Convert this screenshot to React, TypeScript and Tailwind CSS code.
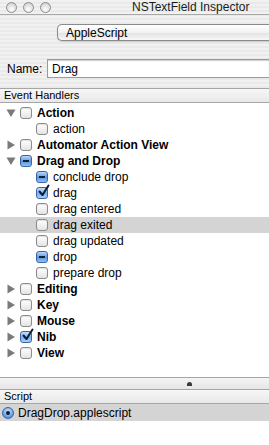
import React from 'react';

type CheckState = 'off' | 'on' | 'mixed';

type Row = {
  label: string;
  level: 0 | 1;
  state: CheckState;
  open?: boolean;
  selected?: boolean;
};

const rows: Row[] = [
  { label: 'Action', level: 0, state: 'off', open: true },
  { label: 'action', level: 1, state: 'off' },
  { label: 'Automator Action View', level: 0, state: 'off', open: false },
  { label: 'Drag and Drop', level: 0, state: 'mixed', open: true },
  { label: 'conclude drop', level: 1, state: 'mixed' },
  { label: 'drag', level: 1, state: 'on' },
  { label: 'drag entered', level: 1, state: 'off' },
  { label: 'drag exited', level: 1, state: 'off', selected: true },
  { label: 'drag updated', level: 1, state: 'off' },
  { label: 'drop', level: 1, state: 'mixed' },
  { label: 'prepare drop', level: 1, state: 'off' },
  { label: 'Editing', level: 0, state: 'off', open: false },
  { label: 'Key', level: 0, state: 'off', open: false },
  { label: 'Mouse', level: 0, state: 'off', open: false },
  { label: 'Nib', level: 0, state: 'on', open: false },
  { label: 'View', level: 0, state: 'off', open: false },
];

function Triangle({ open }: { open: boolean }) {
  return (
    <svg width="10" height="10" viewBox="0 0 10 10" className="shrink-0">
      {open ? (
        <polygon points="0.5,1.5 9.5,1.5 5,9" fill="#7a7a7a" />
      ) : (
        <polygon points="1.5,0.5 9,5 1.5,9.5" fill="#7a7a7a" />
      )}
    </svg>
  );
}

function Checkbox({ state }: { state: CheckState }) {
  if (state === 'off') {
    return (
      <div className="w-[12px] h-[12px] shrink-0 rounded-[3px] border border-[#8c8c8c] bg-[linear-gradient(#ffffff,#e4e4e4)] shadow-[inset_0_1px_1px_rgba(0,0,0,0.12)]" />
    );
  }
  if (state === 'mixed') {
    return (
      <div className="w-[12px] h-[12px] shrink-0 rounded-[3px] border border-[#3a63a8] bg-[linear-gradient(#b9d6f6,#5a98e2_55%,#8fc2f6)] flex items-center justify-center">
        <div className="w-[6px] h-[2px] bg-[#0f1f3f]" />
      </div>
    );
  }
  return (
    <div className="relative w-[12px] h-[12px] shrink-0 rounded-[3px] border border-[#3a63a8] bg-[linear-gradient(#c6def8,#7ab0ec_55%,#a9d0f8)]">
      <svg width="14" height="14" viewBox="0 0 14 14" className="absolute -top-[4px] left-[0px]">
        <path d="M2.5 7.5 L5.5 11 L11.5 1.5" stroke="#0c1a36" strokeWidth="2" fill="none" strokeLinecap="round" strokeLinejoin="round" />
      </svg>
    </div>
  );
}

function TreeRow({ row }: { row: Row }) {
  return (
    <div className={`h-[16px] flex items-center ${row.selected ? 'bg-[#d4d4d4]' : ''}`}>
      {row.level === 0 ? (
        <div className="flex items-center pl-[6px]">
          <Triangle open={!!row.open} />
          <div className="ml-[4px]">
            <Checkbox state={row.state} />
          </div>
          <span className="ml-[5px] font-bold text-[12px] text-black whitespace-nowrap">{row.label}</span>
        </div>
      ) : (
        <div className="flex items-center pl-[36px]">
          <Checkbox state={row.state} />
          <span className="ml-[5px] text-[12px] text-black whitespace-nowrap">{row.label}</span>
        </div>
      )}
    </div>
  );
}

export default function App() {
  return (
    <div
      className="w-[269px] h-[445px] overflow-hidden flex flex-col bg-[repeating-linear-gradient(#f1f1f1_0px,#f1f1f1_2px,#e9e9e9_2px,#e9e9e9_4px)] text-black"
      style={{ fontFamily: '"Liberation Sans", Arial, sans-serif' }}
    >
      {/* title bar */}
      <div className="h-[15px] shrink-0 flex items-center border-b border-[#a8a8a8]">
        <div className="flex items-center gap-[6px] pl-[6px]">
          {[0, 1, 2].map((i) => (
            <div
              key={i}
              className="w-[11px] h-[11px] rounded-full border border-[#8e8e8e] bg-[radial-gradient(circle_at_50%_70%,#ffffff,#d8d8d8_70%,#bdbdbd)]"
            />
          ))}
        </div>
        <div className="ml-[81px] text-[12px] leading-none text-[#1a1a1a] whitespace-nowrap">NSTextField Inspector</div>
      </div>

      {/* popup */}
      <div className="mt-[9px] pl-[57px] shrink-0">
        <div className="h-[17px] rounded-l-[5px] border border-r-0 border-[#8a8a8a] bg-[linear-gradient(#ffffff,#f2f2f2_50%,#e2e2e2_51%,#f6f6f6)] flex items-center pl-[8px] text-[12px] shadow-[0_1px_1px_rgba(0,0,0,0.15)]">
          AppleScript
        </div>
      </div>

      {/* name field */}
      <div className="mt-[18px] flex items-center shrink-0">
        <span className="pl-[7px] text-[12px] w-[47px]">Name:</span>
        <div className="flex-1 h-[19px] border border-[#9a9a9a] border-r-0 bg-white flex items-center pl-[4px] text-[12px] shadow-[inset_0_1px_1px_rgba(0,0,0,0.2)]">
          Drag
        </div>
      </div>

      {/* event handlers list */}
      <div className="mt-[10px] flex-1 flex flex-col min-h-0">
        <div className="h-[15px] shrink-0 border-t border-b border-[#a6a6a6] bg-[linear-gradient(#f7f7f7,#e8e8e8)] flex items-center pl-[4px] text-[11px]">
          Event Handlers
        </div>
        <div className="h-[274px] shrink-0 bg-white pt-[2px]">
          {rows.map((row) => (
            <TreeRow key={row.label} row={row} />
          ))}
        </div>

        {/* splitter */}
        <div className="h-[12px] shrink-0 border-t border-[#a6a6a6] bg-[linear-gradient(#f4f4f4,#e6e6e6)] flex items-center">
          <div className="ml-[187px] w-[5px] h-[4px] rounded-t-full bg-[#3a3a3a]" />
        </div>

        {/* script list */}
        <div className="h-[15px] shrink-0 border-t border-b border-[#a6a6a6] bg-[linear-gradient(#f7f7f7,#e8e8e8)] flex items-center pl-[4px] text-[11px]">
          Script
        </div>
        <div className="flex-1 bg-white">
          <div className="h-[17px] bg-[#d4d4d4] flex items-center pl-[2px]">
            <div className="w-[12px] h-[12px] rounded-full border border-[#3a63a8] bg-[radial-gradient(circle_at_50%_35%,#d6e8fb,#5a98e2_70%,#3f7bd0)] flex items-center justify-center">
              <div className="w-[4px] h-[4px] rounded-full bg-[#0c1a36]" />
            </div>
            <span className="ml-[4px] text-[12px] whitespace-nowrap">DragDrop.applescript</span>
          </div>
        </div>
      </div>
    </div>
  );
}
